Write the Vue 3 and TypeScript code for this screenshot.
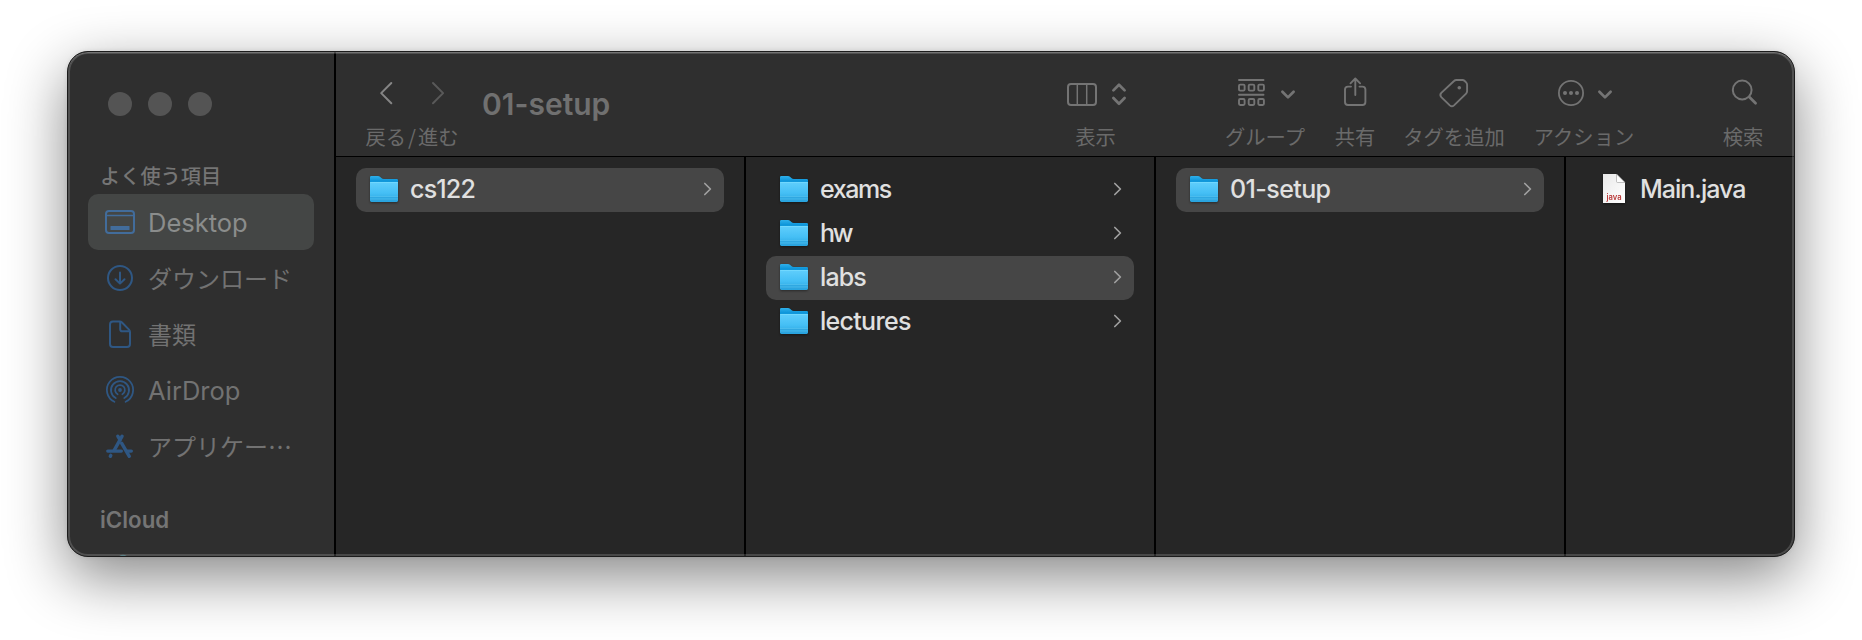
<script setup lang="ts">
interface Place {
  name: string
  icon: 'desktop' | 'download' | 'document' | 'airdrop' | 'apps'
  cls: string
}
interface Entry {
  name: string
  kind: 'folder' | 'java'
  selected?: boolean
  cls: string
}

const places: Place[] = [
  { name: 'Desktop', icon: 'desktop', cls: 'latin' },
  { name: 'ダウンロード', icon: 'download', cls: 'kana' },
  { name: '書類', icon: 'document', cls: 'kanji' },
  { name: 'AirDrop', icon: 'airdrop', cls: 'latin' },
  { name: 'アプリケー⋯', icon: 'apps', cls: 'kana' },
]

const columns: Entry[][] = [
  [{ name: 'cs122', kind: 'folder', selected: true, cls: 'n-cs' }],
  [
    { name: 'exams', kind: 'folder', cls: 'n-exams' },
    { name: 'hw', kind: 'folder', cls: 'n-hw' },
    { name: 'labs', kind: 'folder', selected: true, cls: 'n-labs' },
    { name: 'lectures', kind: 'folder', cls: 'n-lectures' },
  ],
  [{ name: '01-setup', kind: 'folder', selected: true, cls: 'n-setup' }],
  [{ name: 'Main.java', kind: 'java', cls: 'n-main' }],
]
</script>

<template>
  <div class="stage">
    <svg class="defs" width="0" height="0">
      <defs>
        <linearGradient id="folderFront" x1="0" y1="0" x2="0" y2="1">
          <stop offset="0" stop-color="#60cefc" />
          <stop offset="0.55" stop-color="#45bff5" />
          <stop offset="1" stop-color="#28a3de" />
        </linearGradient>
        <linearGradient id="folderBack" x1="0" y1="0" x2="0" y2="1">
          <stop offset="0" stop-color="#2fb0ea" />
          <stop offset="0.6" stop-color="#058fd6" />
        </linearGradient>
        <linearGradient id="paper" x1="0" y1="0" x2="1" y2="1">
          <stop offset="0" stop-color="#e9e9e9" />
          <stop offset="1" stop-color="#ffffff" />
        </linearGradient>
      </defs>
    </svg>
    <div class="window">
      <aside class="sidebar">
        <div class="lights"><i /><i /><i /></div>
        <h2 class="heading jp">よく使う項目</h2>
        <ul class="places">
          <li v-for="(p, i) in places" :key="p.name" :class="{ active: i === 0 }">
            <svg class="place-icon" viewBox="0 0 32 32" width="32" height="32">
              <g v-if="p.icon === 'desktop'" fill="none" stroke="currentColor" stroke-width="2">
                <rect x="2" y="5" width="28" height="22" rx="3" />
                <path d="M2 9.5H30" stroke-width="1.6" />
                <rect x="6.5" y="20" width="19" height="4" rx=".5" fill="currentColor" stroke="none" />
              </g>
              <g v-else-if="p.icon === 'download'" fill="none" stroke="currentColor" stroke-width="2" stroke-linecap="round" stroke-linejoin="round">
                <circle cx="16" cy="16" r="12" />
                <path d="M16 10.5V21.4M11.5 17.2L16 21.6L20.5 17.2" />
              </g>
              <g v-else-if="p.icon === 'document'" fill="none" stroke="currentColor" stroke-width="2" stroke-linejoin="round">
                <path d="M9 3.5H15.6Q17 3.5 18 4.5L25 11.6Q26 12.6 26 14V26Q26 29 23 29H9Q6 29 6 26V6.5Q6 3.5 9 3.5Z" />
                <path d="M16.2 4V11.2Q16.2 13.3 18.3 13.3H25.5" />
              </g>
              <g v-else-if="p.icon === 'airdrop'" fill="none" stroke="currentColor" stroke-width="1.8" stroke-linecap="round">
                <circle cx="16" cy="16" r="1.9" fill="currentColor" stroke="none" />
                <path d="M13.6 20.2A4.9 4.9 0 1 1 18.4 20.2" />
                <path d="M11.7 24A9 9 0 1 1 20.3 24" />
                <path d="M10.4 27.8A13.1 13.1 0 1 1 21.6 27.8" />
              </g>
              <g v-else fill="none" stroke="currentColor" stroke-width="3.4" stroke-linecap="round">
                <path d="M18.1 6.2L10.3 20.1" />
                <path d="M13.8 6.2L16 9.8" />
                <path d="M17.6 13.2L25.3 26.3" />
                <path d="M3.8 21.1H17.3M23.2 21.1H27.3" />
                <path d="M6.8 25.4L6.3 26.3" />
              </g>
            </svg>
            <span :class="['place-name', p.cls]">{{ p.name }}</span>
          </li>
        </ul>
        <h2 class="heading cloud-heading">iCloud</h2>
        <svg class="cloud-peek" viewBox="0 0 12 3" width="12" height="3"><path d="M1 3Q6-1.6 11 3Z" fill="#417c86" /></svg>
      </aside>

      <main class="browser">
        <header class="toolbar">
          <div class="tool nav">
            <svg viewBox="0 0 92 36" width="92" height="36" fill="none" stroke-width="2" stroke-linecap="round" stroke-linejoin="round">
              <path d="M25.3 7L15.2 17.1L25.3 27.2" stroke="#858585" />
              <path d="M67 7L77.1 17.1L67 27.2" stroke="#595959" />
            </svg>
            <span class="jp nav-label">戻る<b>/</b>進む</span>
          </div>
          <h1>01-setup</h1>
          <div class="tool view">
            <svg viewBox="0 0 60 36" width="60" height="36" fill="none" stroke="currentColor" stroke-width="2" stroke-linecap="round" stroke-linejoin="round">
              <rect x="1" y="8" width="28" height="21" rx="3" />
              <path d="M10.3 8V29M19.7 8V29" stroke-width="1.5" />
              <path d="M46.4 14.4L52 8.7L57.6 14.4M46.4 22L52 27.7L57.6 22" stroke-width="2.7" />
            </svg>
            <span class="jp view-label">表示</span>
          </div>
          <div class="tool group">
            <svg viewBox="0 0 80 36" width="80" height="36" fill="none" stroke="currentColor" stroke-width="1.9" stroke-linecap="round" stroke-linejoin="round">
              <path d="M14 4H38.5M14 18.7H38.5" />
              <rect x="14" y="8.6" width="5.6" height="6" rx="1.2" />
              <rect x="23.7" y="8.6" width="5.6" height="6" rx="1.2" />
              <rect x="33.3" y="8.6" width="5.6" height="6" rx="1.2" />
              <rect x="14" y="23" width="5.6" height="6" rx="1.2" />
              <rect x="23.7" y="23" width="5.6" height="6" rx="1.2" />
              <rect x="33.3" y="23" width="5.6" height="6" rx="1.2" />
              <path d="M57.4 15.7L63 21.4L68.6 15.7" stroke-width="2.7" />
            </svg>
            <span class="jp">グループ</span>
          </div>
          <div class="tool share">
            <svg viewBox="0 0 40 36" width="40" height="36" fill="none" stroke="currentColor" stroke-width="1.9" stroke-linecap="round" stroke-linejoin="round">
              <path d="M16 10.6H13Q10 10.6 10 13.6V26Q10 29 13 29H27.4Q30.4 29 30.4 26V13.6Q30.4 10.6 27.4 10.6H24.5" />
              <path d="M20.3 19V2.6M15.5 7.3L20.3 2.5L25.1 7.3" />
            </svg>
            <span class="jp">共有</span>
          </div>
          <div class="tool tag">
            <svg viewBox="0 0 100 36" width="100" height="36" fill="none" stroke="currentColor" stroke-width="1.9" stroke-linecap="round" stroke-linejoin="round">
              <path d="M50 5Q51 4 52.5 4H58.4Q59.7 4 60.7 5L62.1 6.4Q63.1 7.4 63.1 8.8V15.1Q63.1 16.6 62.1 17.6L50 29.4Q47.9 31.3 45.8 29.4L37.3 21.1Q35.4 19 37.3 16.9Z" />
              <circle cx="55.3" cy="11.7" r="1.8" fill="currentColor" stroke="none" />
            </svg>
            <span class="jp">タグを追加</span>
          </div>
          <div class="tool action">
            <svg viewBox="0 0 100 36" width="100" height="36" fill="none" stroke="currentColor" stroke-width="1.8" stroke-linecap="round" stroke-linejoin="round">
              <circle cx="37" cy="17" r="12.1" />
              <g fill="currentColor" stroke="none"><circle cx="31" cy="17" r="2" /><circle cx="37" cy="17" r="2" /><circle cx="43" cy="17" r="2" /></g>
              <path d="M65.4 15.7L71 21.4L76.6 15.7" stroke-width="2.7" />
            </svg>
            <span class="jp">アクション</span>
          </div>
          <div class="tool search">
            <svg viewBox="0 0 40 36" width="40" height="36" fill="none" stroke="currentColor" stroke-width="2" stroke-linecap="round">
              <circle cx="19.2" cy="14" r="9.4" />
              <path d="M26.3 21L32.6 27.3" stroke-width="2.7" />
            </svg>
            <span class="jp">検索</span>
          </div>
        </header>

        <div class="columns">
          <ul v-for="(col, c) in columns" :key="c" class="column">
            <li v-for="e in col" :key="e.name" :class="['row', { selected: e.selected }]">
              <svg v-if="e.kind === 'folder'" class="folder" viewBox="0 0 30 30" width="30" height="30">
                <path d="M1 3.2Q1 2 2.2 2H9Q10.2 2 11 2.7L12.7 4.2Q13.5 4.9 14.7 4.9H27.8Q29 4.9 29 6.1V12H1Z" fill="url(#folderBack)" />
                <path d="M1 8H29V26.6Q29 28 27.6 28H2.4Q1 28 1 26.6Z" fill="url(#folderFront)" />
                <path d="M1.4 8.4H28.6" stroke="#7adcff" stroke-width=".8" />
                <path d="M1 22.5H29M1 25.2H29" stroke="#5cc4f0" stroke-width=".6" />
                <path d="M1 23.4H29M1 26H29" stroke="#2a9fd8" stroke-width=".6" />
              </svg>
              <svg v-else class="file" viewBox="0 0 30 32" width="30" height="32">
                <path d="M4 1H17.5L26 9.5V30H4Z" fill="url(#paper)" />
                <path d="M17.5 1L26 9.5H18.6Q17.5 9.5 17.5 8.4Z" fill="#fdfdfd" stroke="#999" stroke-width=".6" />
                <text x="15" y="26.6" text-anchor="middle" textLength="15" lengthAdjust="spacingAndGlyphs">java</text>
              </svg>
              <span :class="['name', e.cls]">{{ e.name }}</span>
              <svg v-if="e.kind === 'folder'" class="chevron" viewBox="0 0 9 14" width="9" height="14">
                <path d="M1.8 1.5L7.4 7L1.8 12.5" fill="none" stroke="currentColor" stroke-width="1.7" stroke-linecap="round" stroke-linejoin="round" />
              </svg>
            </li>
          </ul>
        </div>
      </main>
    </div>
  </div>
</template>

<style>
html,
body {
  margin: 0;
  background: #fff;
  overflow: hidden;
}
</style>

<style scoped>
* {
  box-sizing: border-box;
}
ul,
h1,
h2 {
  margin: 0;
  padding: 0;
  list-style: none;
}
svg {
  display: block;
  flex: none;
}
.stage {
  width: 1862px;
  height: 640px;
  padding: 51px 67px;
  font-family: Inter, 'Noto Sans CJK JP', sans-serif;
  background: #fff;
}
.defs {
  position: absolute;
}
.window {
  position: relative;
  display: flex;
  width: 1728px;
  height: 506px;
  border: 1px solid #1c1c1c;
  border-radius: 21px;
  overflow: hidden;
  background: #262626;
  box-shadow: 0 20px 60px rgba(0, 0, 0, 0.48), 0 0 4px rgba(0, 0, 0, 0.1);
}
.window::after {
  content: '';
  position: absolute;
  inset: 0;
  border-radius: 20px;
  box-shadow: inset 0 1px 0 rgba(255, 255, 255, 0.2), inset 0 0 0 2px rgba(255, 255, 255, 0.16);
  pointer-events: none;
}
.jp {
  font-family: 'Noto Sans CJK JP', sans-serif;
}
.sidebar {
  flex: none;
  width: 268px;
  height: 504px;
  padding: 40px 20px 0;
  border-right: 2px solid #000;
  background: #2f2f2f;
  overflow: hidden;
}
.lights {
  display: flex;
  gap: 16px;
  padding-left: 20px;
}
.lights i {
  width: 24px;
  height: 24px;
  border-radius: 50%;
  background: #545454;
}
.heading {
  height: 32px;
  margin: 44px 0 2px 12px;
  color: #757575;
  font-size: 20.2px;
  line-height: 32px;
  font-weight: 500;
  white-space: nowrap;
}
.places li {
  display: flex;
  align-items: center;
  width: 226px;
  height: 56px;
  padding-left: 16px;
  border-radius: 10px;
  color: #727272;
}
.places li.active {
  background: #444645;
  color: #8b8d8c;
}
.place-icon {
  color: #2f5783;
}
.active .place-icon {
  color: #426c9b;
}
.place-name {
  margin-left: 12px;
  padding-top: 2px;
  font-size: 25.5px;
  line-height: 54px;
  white-space: nowrap;
}
.places .kana,
.places .kanji {
  padding-top: 0;
  font-family: 'Noto Sans CJK JP', sans-serif;
  font-size: 24px;
}
.cloud-heading {
  margin: 30px 0 0 12px;
  font-size: 22.3px;
  font-weight: 600;
}
.cloud-peek {
  margin: 18px 0 0 29px;
  opacity: 0.7;
}
.browser {
  flex: 1;
  min-width: 0;
}
.toolbar {
  display: flex;
  height: 105px;
  padding: 24px 31px 0 30px;
  border-bottom: 1px solid #000;
  background: #2f2f2f;
}
.tool {
  display: flex;
  flex-direction: column;
  align-items: center;
  flex: none;
  width: 40px;
  height: 76px;
  color: #747474;
}
.tool span {
  margin-top: 8px;
  color: #6a6a6a;
  font-size: 20.3px;
  line-height: 32px;
  white-space: nowrap;
}
.nav {
  width: 92px;
}
.nav-label b {
  margin: 0 2px;
  font-weight: 400;
}
h1 {
  margin: 8px auto 0 24px;
  height: 40px;
  color: #707070;
  font-size: 30px;
  line-height: 40px;
  font-weight: 600;
}
.view {
  width: 60px;
  margin-right: 98px;
}
.tool .view-label {
  margin-right: 3px;
}
.group {
  width: 80px;
  margin-right: 30px;
}
.share {
  margin-right: 29px;
}
.tag {
  width: 100px;
  margin-right: 30px;
}
.action {
  width: 100px;
  margin-right: 89px;
}
.columns {
  display: flex;
  height: 399px;
}
.column {
  flex: none;
  width: 410px;
  padding: 11px 20px 0;
  border-right: 2px solid #000;
}
.column:last-child {
  flex: 1;
  width: auto;
  border-right: 0;
}
.row {
  display: flex;
  align-items: center;
  height: 44px;
  padding: 0 12px 2px 13px;
  border-radius: 10px;
  color: #e0e0e0;
}
.selected {
  background: #464646;
}
.folder {
  margin-right: 11px;
  filter: drop-shadow(0 1px 1px rgba(0, 0, 0, 0.4));
}
.file {
  margin: 0 11px 0 0;
  filter: drop-shadow(0 1px 1px rgba(0, 0, 0, 0.4));
}
.file text {
  font-family: Inter, sans-serif;
  font-size: 8px;
  font-weight: 600;
  fill: #b93636;
}
.name {
  font-size: 25px;
  line-height: 42px;
  font-weight: 500;
  white-space: nowrap;
}
.n-cs {
  letter-spacing: -0.8px;
}
.n-exams {
  letter-spacing: -1.4px;
}
.n-hw {
  letter-spacing: -2.4px;
}
.n-labs {
  letter-spacing: -0.9px;
}
.n-lectures {
  letter-spacing: -0.7px;
}
.n-setup {
  letter-spacing: -0.6px;
}
.n-main {
  letter-spacing: -1px;
}
.chevron {
  margin-left: auto;
  color: #a0a0a0;
}
</style>
